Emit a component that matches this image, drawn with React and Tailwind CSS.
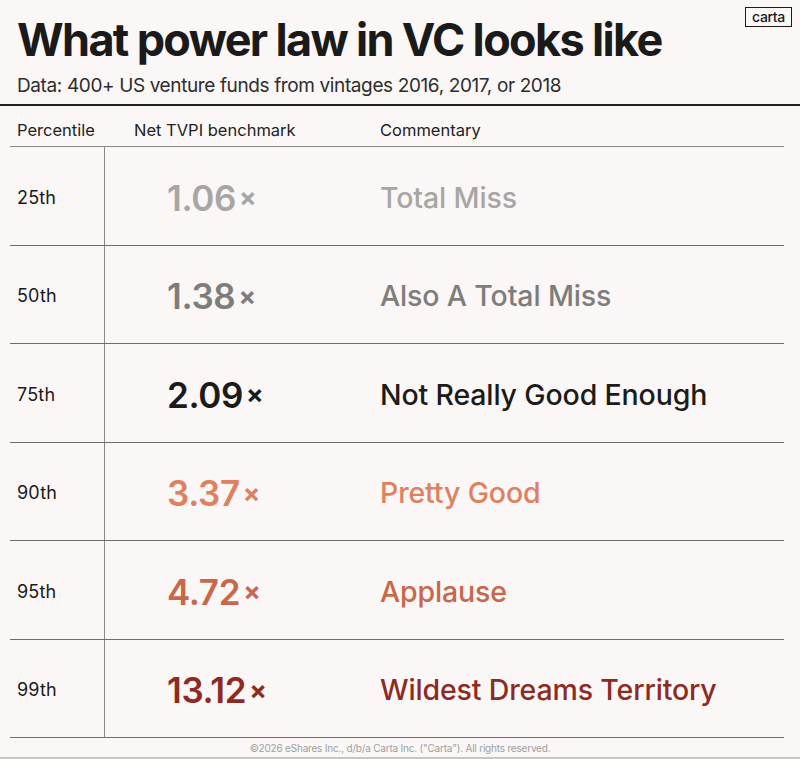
import React from 'react';

const rows = [
  { pct: '25th', value: '1.06', note: 'Total Miss', color: 'text-[#a8a6a5]' },
  { pct: '50th', value: '1.38', note: 'Also A Total Miss', color: 'text-[#7f7d7c]' },
  { pct: '75th', value: '2.09', note: 'Not Really Good Enough', color: 'text-[#1c1b1b]' },
  { pct: '90th', value: '3.37', note: 'Pretty Good', color: 'text-[#e0805f]' },
  { pct: '95th', value: '4.72', note: 'Applause', color: 'text-[#c9674a]' },
  { pct: '99th', value: '13.12', note: 'Wildest Dreams Territory', color: 'text-[#8e2a24]' },
];

const App = () => {
  return (
    <div className="w-[800px] h-[759px] bg-[#faf7f6] font-['Inter',sans-serif] text-[#1a1a1a] relative overflow-hidden">
      {/* logo */}
      <div className="absolute top-[7px] right-[8px] w-[47px] border-[1.5px] border-[#1a1a1a] h-[20px] flex items-center justify-center text-[14px] font-medium leading-none tracking-tight">
        carta
      </div>

      <div className="px-[17px] pt-[14px]">
        <h1 className="text-[45px] font-bold tracking-[-0.037em] leading-[52px]">What power law in VC looks like</h1>
        <p className="text-[19px] text-[#2d2d2d] tracking-[-0.02em] leading-[24px] mt-[8px]">
          Data: 400+ US venture funds from vintages 2016, 2017, or 2018
        </p>
      </div>

      <div className="mt-[6px] h-[2px] bg-[#222]" />

      <div className="pl-[10px] pr-[16px]">
        {/* header */}
        <div className="flex h-[41px] items-center pt-[8px] text-[16.5px] text-[#222] border-b border-[#8a8888]">
          <div className="w-[95px] pl-[7px]">Percentile</div>
          <div className="w-[275px] pl-[29px]">Net TVPI benchmark</div>
          <div>Commentary</div>
        </div>

        {rows.map((r) => (
          <div key={r.pct} className="flex h-[98.5px] border-b border-[#6f6d6c]">
            <div className="w-[95px] pl-[7px] pt-[3px] flex items-center text-[18px] tracking-[0.01em] border-r border-[#8a8888]">{r.pct}</div>
            <div className={`w-[275px] pl-[62px] pt-[4px] flex items-center font-semibold text-[35px] tracking-[-0.01em] ${r.color}`}>
              {r.value}
              <span className="text-[26px] ml-[3px] font-bold">×</span>
            </div>
            <div className={`flex items-center pt-[5px] text-[28.5px] font-medium tracking-[-0.005em] ${r.color}`}>{r.note}</div>
          </div>
        ))}
      </div>

      <div className="text-center text-[10px] text-[#a09e9d] tracking-[-0.02em] mt-[3px]">
        ©2026 eShares Inc., d/b/a Carta Inc. ("Carta"). All rights reserved.
      </div>
      <div className="absolute bottom-0 left-0 right-0 h-[2px] bg-[#c9c7c6]" />
    </div>
  );
};

export default App;
